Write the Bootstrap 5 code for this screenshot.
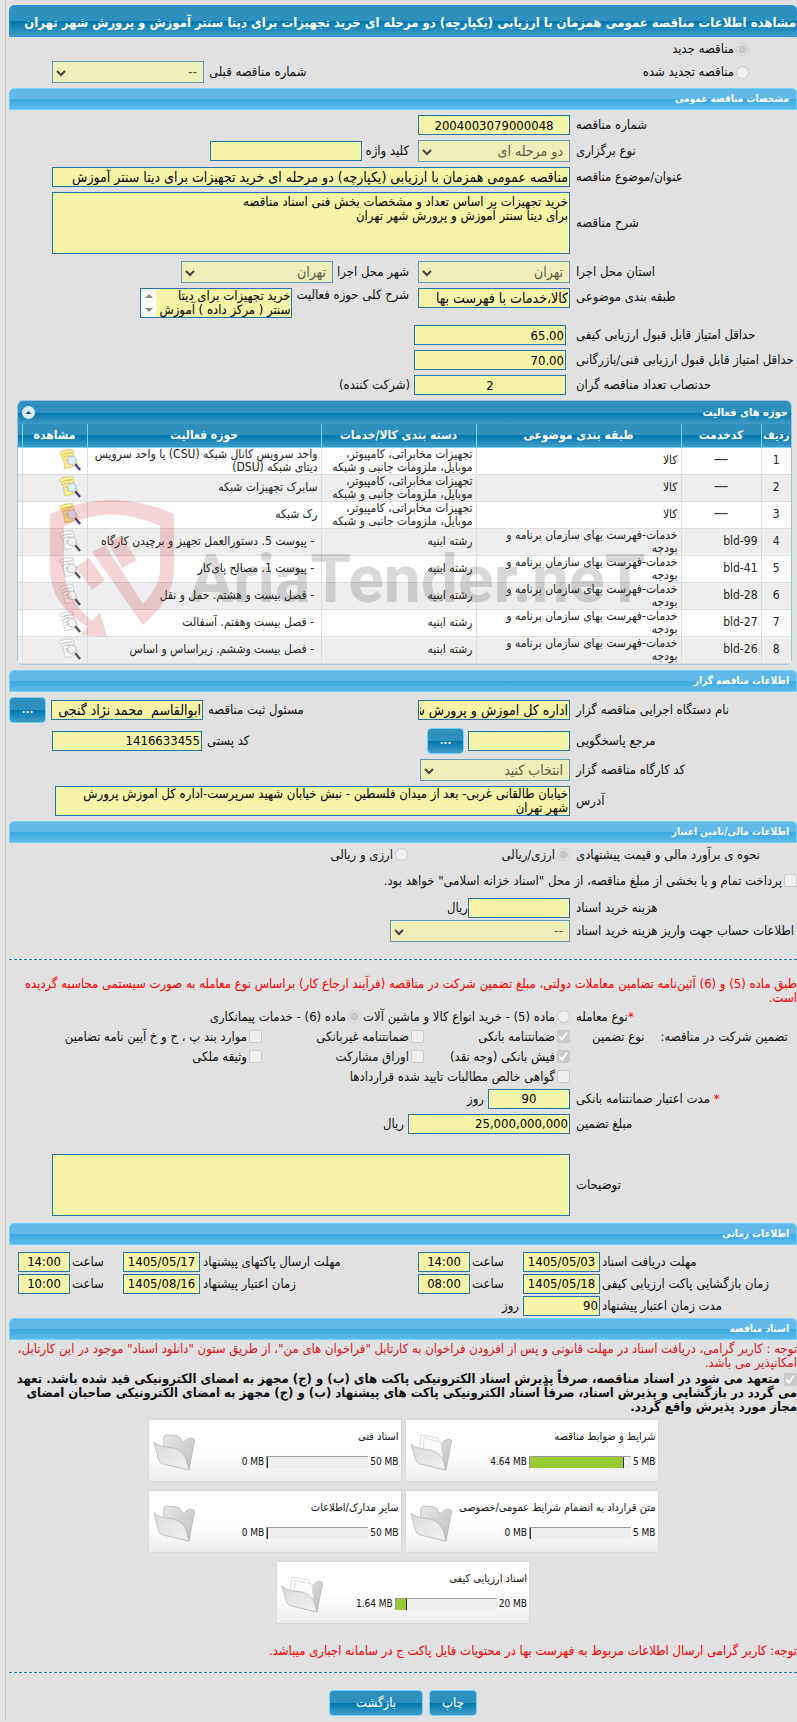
<!DOCTYPE html>
<html lang="fa" dir="rtl">
<head>
<meta charset="utf-8">
<meta name="viewport" content="width=device-width, initial-scale=1">
<title>مشاهده اطلاعات مناقصه عمومی</title>
<link href="https://cdn.jsdelivr.net/npm/bootstrap@5.3.0/dist/css/bootstrap.min.css" rel="stylesheet">
<style>
body{background:#e1e1e1;color:#111;font:13px/14px "DejaVu Sans Condensed","DejaVu Sans",sans-serif;overflow-x:hidden}
.sheet{margin-left:5px;padding:5px 0;padding-left:3px;border-left:1px solid #c6c6c6}
.g2{margin-top:2px}.g5{margin-top:5px}.g7{margin-top:7px}.g14{margin-top:14px}.g17{margin-top:17px}.g20{margin-top:20px}
h1,h2{margin-bottom:0;font-weight:700;color:#fff;border-radius:5px 5px 0 0;white-space:nowrap}
h1{font-size:13px;line-height:30px;border:1px solid #2f8fdc;padding-top:2px;height:32px;background:linear-gradient(#2f8fbd 50%,#0077af 50%,#409cc7)}
h2{font-size:10px;line-height:20px;height:22px;padding:0 7px;border:1px solid #70d3fb;background:linear-gradient(#62b9e9 50%,#3aa8e0 50%,#5ebbea)}
.line{display:flex;align-items:center;white-space:nowrap}
.h24{min-height:24px}.h20{min-height:20px}
.cap{flex:0 0 221px;text-align:left;margin-left:6px}
.far{margin-right:auto;display:flex;align-items:center;gap:5px}
.sub{margin:0 9px 0 4px}
.box,.pick{display:block;border:1px solid #2277a8;background:#f6f4a6;color:#000;border-radius:0;font-size:13px;line-height:18px;height:20px;padding:0 1px;width:152px;flex:none}
.fa,.pick{font-size:14px}
textarea.box{font-size:13px;line-height:14px;padding:2px 1px 0;resize:none;overflow:hidden}
.pick{height:22px;line-height:20px;padding:0 6px 0 16px;opacity:1;color:#5b5a4b;border-color:#6199b9;appearance:none;background:#efedb8 url("data:image/svg+xml,%3Csvg xmlns='http://www.w3.org/2000/svg' viewBox='0 0 10 7'%3E%3Cpath d='M1 1l4 4 4-4' fill='none' stroke='%23444' stroke-width='2'/%3E%3C/svg%3E") no-repeat 3px 8px/10px 7px}
.grow{flex:1 1 0;width:auto;margin-left:43px}
.edge{margin-left:43px}
.mid{text-align:center}
.w150{width:150px}.w102{width:102px}.w180{width:180px}.w82{width:82px}.w162{width:162px}.w77{width:77px}.w52{width:52px}
.tall{height:62px}
textarea.two{height:30px;padding-top:0;margin-left:46px}
.scroller{width:152px;height:30px;border:1px solid #2277a8;display:flex;flex:none}
.scroller textarea.box{border:0;width:135px;height:28px;padding-top:0}
.scroller svg{background:#fafafa}
input[type=radio],input[type=checkbox]{appearance:none;width:13px;height:13px;margin:0;border:1px solid #c9c9c9;background:#efefef;border-radius:2px;flex:none;opacity:1}
input[type=radio]{border-radius:50%}
input[type=radio]:checked{background:radial-gradient(#cacaca 0 4px,#efefef 5px)}
input[type=checkbox]:checked{background:#cacaca url("data:image/svg+xml,%3Csvg xmlns='http://www.w3.org/2000/svg' viewBox='0 0 13 13'%3E%3Cpath d='M2 6.500l3 3 5-7' fill='none' stroke='%23fff' stroke-width='2'/%3E%3C/svg%3E") center/13px}
.opt{display:flex;align-items:center;gap:2px}
.c1{flex:0 0 146px}.c2{flex:0 0 162px}
.go{border:1px solid #70d3fb;border-radius:4px;color:#fff;background:linear-gradient(#2f8fbd 50%,#0077af 50%,#409cc7);height:26px;font-size:13px;line-height:22px;padding:0}
.dots{width:37px;font-weight:700;font-size:11px}
.dash{border-top:1px dashed #2277a8}
.alarm{color:#f00}
.crimson{color:#d8171b}
.tl{flex:0 0 195px;text-align:left;margin-left:2px}
.hr{flex:0 0 53px;text-align:left;padding-left:2px}
.tm{flex:0 0 218px;text-align:left;padding-left:3px}
.panel{margin:5px 5px 0 8px;border:1px solid #9cc4de;border-radius:6px;background:#fff;position:relative}
.panel-top{height:23px;padding:0 3px 0 4px;border-radius:5px 5px 0 0;color:#fff;font-weight:700;font-size:11px;background:linear-gradient(#2f8fbd 50%,#0077af 50%,#409cc7);display:flex;align-items:center;justify-content:space-between}
.list{width:100%;table-layout:fixed;border-collapse:collapse;color:#222;font-size:12px;line-height:13px}
.list th{height:23px;padding:0;text-align:center;color:#fff;font-size:12px;border-left:1px solid #70d3fb;border-bottom:1px solid #70d3fb;background:linear-gradient(#2f8fbd 50%,#0077af 50%,#409cc7)}
.list th.slim{font-size:11px}
.list td{height:27px;padding:0 3px;border-left:1px solid #ddd;border-bottom:1px solid #ddd;white-space:nowrap}
.list tr:nth-child(even) td{background:#eee}
.list td.thin,.list th.thin{border-left:0;padding:0}
.list td svg{display:block;margin-right:2px}
.stamp{position:absolute;left:32px;top:99px;opacity:.18;direction:ltr;pointer-events:none}
.stamp text{font:700 66px Roboto,"Liberation Sans",sans-serif}
.files{display:flex;flex-wrap:wrap;justify-content:center;gap:8px 3px;width:520px;max-width:100%;margin:5px auto 0;font-size:11px;line-height:12px}
.file{width:254px;height:63px;border:1px solid #d9d9d9;background:linear-gradient(#fff 55%,#ececec);display:flex;justify-content:space-between;padding:11px 2px 0 4px}
.file svg{margin-top:3px}
.meter{display:flex;align-items:center;gap:2px;margin-top:13px;direction:ltr;justify-content:flex-end;font-size:10px}
.track{width:102px;height:12px;background:#eee;border:1px solid #999;border-width:1px 0 0 1px}
.fill{height:11px;background:#9c3;border-right:1px solid #333}
.acts{margin-top:17px;gap:6px}
.wa{width:48px}.wb{width:94px}
</style>
</head>
<body>
<svg width="0" height="0" class="position-absolute">
<defs>
<linearGradient id="ga" x2="1" y2="1"><stop stop-color="#e8e8e8"/><stop offset="1" stop-color="#bdbdbd"/></linearGradient>
<linearGradient id="gb" x2="1" y2="1"><stop stop-color="#d9d9d9"/><stop offset="1" stop-color="#f3f3f3"/></linearGradient>
</defs>
<symbol id="view" viewBox="0 0 24 24"><path d="M1 4Q6 0 15 1Q15 8 20 15Q14 21 6 20Q7 12 1 4Z" fill="#faf195" stroke="#d3bc66" stroke-width=".8"/><path d="M4 6q5-2 10-2M5 9q4-2 7-2M7 12q2-1 3-1M8 15l2-1" stroke="#c3a85a" stroke-width=".8" fill="none"/><circle cx="14" cy="12" r="4.500" fill="#dceeff" stroke="#a9b9d2"/><path d="M17.500 16l5 6" stroke="#493a90" stroke-width="2.500"/></symbol>
<symbol id="viewoff" viewBox="0 0 24 24"><path d="M1 4Q6 0 15 1Q15 8 20 15Q14 21 6 20Q7 12 1 4Z" fill="#f8f8f8" stroke="#c4c4c4" stroke-width=".8"/><path d="M4 6q5-2 10-2M5 9q4-2 7-2M7 12q2-1 3-1M8 15l2-1" stroke="#aaa" stroke-width=".8" fill="none"/><circle cx="14" cy="12" r="4.500" fill="#f2f2f2" stroke="#bbb"/><path d="M17.500 16l5 6" stroke="#555" stroke-width="2.500"/></symbol>
<symbol id="folder" viewBox="0 0 42 37"><path d="M11 3q1-3 4-2l9 1q4 1 5 6 2 1 4-2 4-3 8-1 2 1 0 4L36 36 10 29Z" fill="url(#ga)" stroke="#b4b4b4" stroke-width=".8"/><path d="M1 8q4 4 11 5l9 1q9 3 12 11l3 11-26-6q-4-1-5-6Z" fill="url(#gb)" stroke="#b8b8b8" stroke-width=".8"/></symbol>
<symbol id="papers" viewBox="0 0 42 37"><path d="M29 10q3 1 5-3 4-3 7-1 2 1 0 4L36 36 10 29Z" fill="url(#ga)" stroke="#b4b4b4" stroke-width=".8"/><path d="M11 1l17 3 1 24-20-6Z" fill="#fff" stroke="#ddd"/><path d="M14 4l17 4 2 21-20-8Z" fill="#fafafa" stroke="#ddd"/><path d="M1 10q4 4 11 5l9 1q9 3 12 10l3 10-26-6q-4-1-5-6Z" fill="url(#gb)" stroke="#b8b8b8" stroke-width=".8"/></symbol>
</svg>

<main class="sheet">
<h1>مشاهده اطلاعات مناقصه عمومی همزمان با ارزیابی (یکپارچه) دو مرحله ای خرید تجهیزات برای دیتا سنتر آموزش و پرورش شهر تهران</h1>
<form>
<div class="line h24"><span class="opt me-5"><input type="radio" name="kind" id="k1" checked disabled><label for="k1">مناقصه جدید</label></span></div>
<div class="line"><span class="opt me-5"><input type="radio" name="kind" id="k2" disabled><label for="k2">مناقصه تجدید شده</label></span>
<div class="far"><label for="prev">شماره مناقصه قبلی</label><select class="pick edge" id="prev" disabled><option>--</option></select></div></div>

<h2 class="g5">مشخصات مناقصه عمومی</h2>
<div class="line g5"><label class="cap" for="num">شماره مناقصه</label><input class="box mid" id="num" value="2004003079000048" readonly></div>
<div class="line g5"><label class="cap" for="type">نوع برگزاری</label><select class="pick" id="type" disabled><option>دو مرحله ای</option></select><label class="sub" for="key">کلید واژه</label><input class="box" id="key" readonly></div>
<div class="line g5"><label class="cap" for="subj">عنوان/موضوع مناقصه</label><input class="box fa grow" id="subj" value="مناقصه عمومی همزمان با ارزیابی (یکپارچه) دو مرحله ای خرید تجهیزات برای دیتا سنتر آموزش" readonly></div>
<div class="line g5"><label class="cap" for="desc">شرح مناقصه</label><textarea class="box grow tall" id="desc" readonly>خرید تجهیزات بر اساس تعداد و مشخصات بخش فنی اسناد مناقصه
برای دیتا سنتر آموزش و پرورش شهر تهران</textarea></div>
<div class="line g7"><label class="cap" for="prov">استان محل اجرا</label><select class="pick" id="prov" disabled><option>تهران</option></select><label class="sub" for="city">شهر محل اجرا</label><select class="pick" id="city" disabled><option>تهران</option></select></div>
<div class="line g5 align-items-start"><label class="cap g2" for="cat">طبقه بندی موضوعی</label><input class="box fa" id="cat" value="کالا،خدمات با فهرست بها" readonly><label class="sub g2" for="field">شرح کلی حوزه فعالیت</label>
<div class="scroller"><textarea class="box" id="field" readonly>خرید تجهیزات برای دیتا
سنتر ( مرکز داده ) آموزش</textarea><svg width="15" height="28"><path d="M4 9l4-4 4 4zM4 19l4 4 4-4z" fill="#888"/></svg></div></div>
<div class="line g7"><label class="cap" for="q1">حداقل امتیاز قابل قبول ارزیابی کیفی</label><input class="box me-1" id="q1" value="65.00" readonly></div>
<div class="line g5"><label class="cap" for="q2">حداقل امتیاز قابل قبول ارزیابی فنی/بازرگانی</label><input class="box me-1" id="q2" value="70.00" readonly></div>
<div class="line g5"><label class="cap" for="q3">حدنصاب تعداد مناقصه گران</label><input class="box mid me-1" id="q3" value="2" readonly><span class="me-1">(شرکت کننده)</span></div>

<section class="panel">
<div class="panel-top"><span>حوزه های فعالیت</span><svg width="13" height="13" viewBox="0 0 13 13"><circle cx="6.500" cy="6.500" r="6.500" fill="#dceaf6"/><path d="M3.500 8l3-3 3 3z" fill="#0f5f8f"/></svg></div>
<table class="list">
<colgroup><col style="width:30px"><col style="width:80px"><col style="width:205px"><col style="width:155px"><col><col style="width:65px"><col style="width:4px"></colgroup>
<thead><tr><th class="slim">ردیف</th><th>کدخدمت</th><th>طبقه بندی موضوعی</th><th>دسته بندی کالا/خدمات</th><th>حوزه فعالیت</th><th>مشاهده</th><th class="thin"></th></tr></thead>
<tbody>
<tr><td class="text-center">1</td><td class="text-center">──</td><td>کالا</td><td>تجهیزات مخابراتی، کامپیوتر،<br>موبایل، ملزومات جانبی و شبکه</td><td>واحد سرویس کانال شبکه (CSU) یا واحد سرویس<br>دیتای شبکه (DSU)</td><td><svg width="24" height="23"><use href="#view"/></svg></td><td class="thin"></td></tr>
<tr><td class="text-center">2</td><td class="text-center">──</td><td>کالا</td><td>تجهیزات مخابراتی، کامپیوتر،<br>موبایل، ملزومات جانبی و شبکه</td><td>سابرک تجهیزات شبکه</td><td><svg width="24" height="23"><use href="#view"/></svg></td><td class="thin"></td></tr>
<tr><td class="text-center">3</td><td class="text-center">──</td><td>کالا</td><td>تجهیزات مخابراتی، کامپیوتر،<br>موبایل، ملزومات جانبی و شبکه</td><td>رک شبکه</td><td><svg width="24" height="23"><use href="#view"/></svg></td><td class="thin"></td></tr>
<tr><td class="text-center">4</td><td dir="ltr" class="text-end">bld-99</td><td>خدمات-فهرست بهای سازمان برنامه و<br>بودجه</td><td>رشته ابنیه</td><td>&nbsp;- پیوست 5. دستورالعمل تجهیز و برچیدن کارگاه</td><td><svg width="24" height="23"><use href="#viewoff"/></svg></td><td class="thin"></td></tr>
<tr><td class="text-center">5</td><td dir="ltr" class="text-end">bld-41</td><td>خدمات-فهرست بهای سازمان برنامه و<br>بودجه</td><td>رشته ابنیه</td><td>&nbsp;- پیوست 1. مصالح پای‌کار</td><td><svg width="24" height="23"><use href="#viewoff"/></svg></td><td class="thin"></td></tr>
<tr><td class="text-center">6</td><td dir="ltr" class="text-end">bld-28</td><td>خدمات-فهرست بهای سازمان برنامه و<br>بودجه</td><td>رشته ابنیه</td><td>&nbsp;- فصل بیست و هشتم. حمل و نقل</td><td><svg width="24" height="23"><use href="#viewoff"/></svg></td><td class="thin"></td></tr>
<tr><td class="text-center">7</td><td dir="ltr" class="text-end">bld-27</td><td>خدمات-فهرست بهای سازمان برنامه و<br>بودجه</td><td>رشته ابنیه</td><td>&nbsp;- فصل بیست وهفتم. آسفالت</td><td><svg width="24" height="23"><use href="#viewoff"/></svg></td><td class="thin"></td></tr>
<tr><td class="text-center">8</td><td dir="ltr" class="text-end">bld-26</td><td>خدمات-فهرست بهای سازمان برنامه و<br>بودجه</td><td>رشته ابنیه</td><td>&nbsp;- فصل بیست وششم. زیراساس و اساس</td><td><svg width="24" height="23"><use href="#viewoff"/></svg></td><td class="thin"></td></tr>
</tbody>
</table>
<svg class="stamp" width="620" height="140" viewBox="0 0 620 140">
<g fill="#c9151f"><path d="M0 14Q62-14 124 14V70Q124 98 93 125L42 52 55 45 93 104Q110 86 110 70V26Q62 3 14 26V70Q16 100 42 121L50 112 57 137 30 135 38 127Q0 104 0 70Z"/><path d="M58 42L71 36 87 60 72 68ZM26 67L39 58 55 80 42 90Z"/></g>
<text x="139" y="102" fill="#333">AriaTender.neT</text>
</svg>
</section>

<h2 class="g5">اطلاعات مناقصه گزار</h2>
<div class="line g5"><label class="cap" for="org">نام دستگاه اجرایی مناقصه گزار</label><input class="box fa" id="org" value="اداره کل اموزش و پرورش شهر تهران" readonly>
<div class="far"><label for="resp">مسئول ثبت مناقصه</label><input class="box fa" id="resp" value="ابوالقاسم  محمد نژاد گنجی" readonly><button type="button" class="go dots">...</button></div></div>
<div class="line g5"><label class="cap" for="ref">مرجع پاسخگویی</label><input class="box w102" id="ref" readonly><button type="button" class="go dots me-1">...</button>
<div class="far"><label for="zip">کد پستی</label><input class="box w150 edge" id="zip" value="1416633455" readonly></div></div>
<div class="line g5"><label class="cap" for="shop">کد کارگاه مناقصه گزار</label><select class="pick w150" id="shop" disabled><option>انتخاب کنید</option></select></div>
<div class="line g5"><label class="cap" for="addr">آدرس</label><textarea class="box grow two" id="addr" readonly>خیابان طالقانی غربی- بعد از میدان فلسطین - نبش خیابان شهید سرپرست-اداره کل آموزش پرورش
شهر تهران</textarea></div>

<h2 class="g5">اطلاعات مالی/تامین اعتبار</h2>
<div class="line h24"><span class="cap">نحوه ی برآورد مالی و قیمت پیشنهادی</span><span class="opt c2"><input type="radio" name="cur" id="r1" checked disabled><label for="r1">ارزی/ریالی</label></span><span class="opt"><input type="radio" name="cur" id="r2" disabled><label for="r2">ارزی و ریالی</label></span></div>
<div class="line g2 h24"><span class="opt"><input type="checkbox" id="tre" disabled><label for="tre">پرداخت تمام و یا بخشی از مبلغ مناقصه، از محل "اسناد خزانه اسلامی" خواهد بود.</label></span></div>
<div class="line g5"><label class="cap" for="fee">هزینه خرید اسناد</label><input class="box w102" id="fee" readonly><span>ریال</span></div>
<div class="line g2"><label class="cap" for="acc">اطلاعات حساب جهت واریز هزینه خرید اسناد</label><select class="pick w180" id="acc" disabled><option>--</option></select></div>
<div class="dash g17"></div>
<p class="alarm mb-0 g17">طبق ماده (5) و (6) آئین‌نامه تضامین معاملات دولتی، مبلغ تضمین شرکت در مناقصه (فرآیند ارجاع کار) براساس نوع معامله به صورت سیستمی محاسبه گردیده است.</p>
<div class="line g2 h20"><span class="cap"><span class="alarm">*</span>نوع معامله</span><span class="opt"><input type="radio" name="deal" id="d5" disabled><label for="d5">ماده (5) - خرید انواع کالا و ماشین آلات</label><input type="radio" name="deal" id="d6" checked disabled><label for="d6">ماده (6) - خدمات پیمانکاری</label></span></div>
<div class="line h20"><span class="cap d-flex justify-content-end gap-3"><span>تضمین شرکت در مناقصه:</span><span class="ms-3">نوع تضمین</span></span><span class="opt c1"><input type="checkbox" id="t1" checked disabled><label for="t1">ضمانتنامه بانکی</label></span><span class="opt c2"><input type="checkbox" id="t2" disabled><label for="t2">ضمانتنامه غیربانکی</label></span><span class="opt"><input type="checkbox" id="t3" disabled><label for="t3">موارد بند پ ، ح و خ آیین نامه تضامین</label></span></div>
<div class="line h20"><span class="cap"></span><span class="opt c1"><input type="checkbox" id="t4" checked disabled><label for="t4">فیش بانکی (وجه نقد)</label></span><span class="opt c2"><input type="checkbox" id="t5" disabled><label for="t5">اوراق مشارکت</label></span><span class="opt"><input type="checkbox" id="t6" disabled><label for="t6">وثیقه ملکی</label></span></div>
<div class="line h20"><span class="cap"></span><span class="opt"><input type="checkbox" id="t7" disabled><label for="t7">گواهی خالص مطالبات تایید شده قراردادها</label></span></div>
<div class="line g2"><label class="cap" for="dur"><span class="alarm">*</span> مدت اعتبار ضمانتنامه بانکی</label><input class="box mid w82" id="dur" value="90" readonly><span class="me-1">روز</span></div>
<div class="line g5"><label class="cap" for="amt">مبلغ تضمین</label><input class="box w162" id="amt" value="25,000,000,000" readonly><span class="me-1">ریال</span></div>
<div class="line g20"><label class="cap" for="note">توضیحات</label><textarea class="box grow tall" id="note" readonly></textarea></div>

<h2 class="g7">اطلاعات زمانی</h2>
<div class="line g7"><label class="tl" for="a1">مهلت دریافت اسناد</label><input class="box mid w77" id="a1" value="1405/05/03" readonly><label class="hr" for="a2">ساعت</label><input class="box mid w52" id="a2" value="14:00" readonly><label class="tm" for="a3">مهلت ارسال پاکتهای پیشنهاد</label><input class="box mid w77" id="a3" value="1405/05/17" readonly><label class="hr" for="a4">ساعت</label><input class="box mid w52" id="a4" value="14:00" readonly></div>
<div class="line g2"><label class="tl" for="b1">زمان بازگشایی پاکت ارزیابی کیفی</label><input class="box mid w77" id="b1" value="1405/05/18" readonly><label class="hr" for="b2">ساعت</label><input class="box mid w52" id="b2" value="08:00" readonly><label class="tm" for="b3">زمان اعتبار پیشنهاد</label><input class="box mid w77" id="b3" value="1405/08/16" readonly><label class="hr" for="b4">ساعت</label><input class="box mid w52" id="b4" value="10:00" readonly></div>
<div class="line g2"><label class="tl" for="c9">مدت زمان اعتبار پیشنهاد</label><input class="box w77" id="c9" value="90" readonly><span class="me-1">روز</span></div>

<h2 class="g2">اسناد مناقصه</h2>
<p class="mb-0 g2 crimson">توجه : کاربر گرامی، دریافت اسناد در مهلت قانونی و پس از افزودن فراخوان به کارتابل "فراخوان های من"، از طریق ستون "دانلود اسناد" موجود در این کارتابل، امکانپذیر می باشد.</p>
<div class="g2 fw-bold"><input type="checkbox" id="ok" checked disabled class="align-middle"> <label for="ok" class="d-inline">متعهد می شود در اسناد مناقصه، صرفاً پذیرش اسناد الکترونیکی پاکت های (ب) و (ج) مجهز به امضای الکترونیکی قید شده باشد. تعهد می گردد در بازگشایی و پذیرش اسناد، صرفاً اسناد الکترونیکی پاکت های پیشنهاد (ب) و (ج) مجهز به امضای الکترونیکی صاحبان امضای مجاز مورد پذیرش واقع گردد.</label></div>

<div class="files">
<div class="file"><div><div>شرایط و ضوابط مناقصه</div><div class="meter"><span>4.64 MB</span><div class="track"><div class="fill" style="width:93%"></div></div><span>5 MB</span></div></div><svg width="42" height="37"><use href="#papers"/></svg></div>
<div class="file"><div><div>اسناد فنی</div><div class="meter"><span>0 MB</span><div class="track"><div class="fill" style="width:1%"></div></div><span>50 MB</span></div></div><svg width="42" height="37"><use href="#folder"/></svg></div>
<div class="file"><div><div>متن قرارداد به انضمام شرایط عمومی/خصوصی</div><div class="meter"><span>0 MB</span><div class="track"><div class="fill" style="width:1%"></div></div><span>5 MB</span></div></div><svg width="42" height="37"><use href="#folder"/></svg></div>
<div class="file"><div><div>سایر مدارک/اطلاعات</div><div class="meter"><span>0 MB</span><div class="track"><div class="fill" style="width:1%"></div></div><span>50 MB</span></div></div><svg width="42" height="37"><use href="#folder"/></svg></div>
<div class="file"><div><div>اسناد ارزیابی کیفی</div><div class="meter"><span>1.64 MB</span><div class="track"><div class="fill" style="width:11%"></div></div><span>20 MB</span></div></div><svg width="42" height="37"><use href="#papers"/></svg></div>
</div>
<p class="alarm g20 mb-0">توجه: کاربر گرامی ارسال اطلاعات مربوط به فهرست بها در محتویات فایل پاکت ج در سامانه اجباری میباشد.</p>
<div class="dash g14"></div>
<div class="d-flex justify-content-center acts"><button type="button" class="go wa">چاپ</button><button type="button" class="go wb">بازگشت</button></div>
</form>
</main>
<script src="https://cdn.jsdelivr.net/npm/bootstrap@5.3.0/dist/js/bootstrap.bundle.min.js"></script>
</body>
</html>
